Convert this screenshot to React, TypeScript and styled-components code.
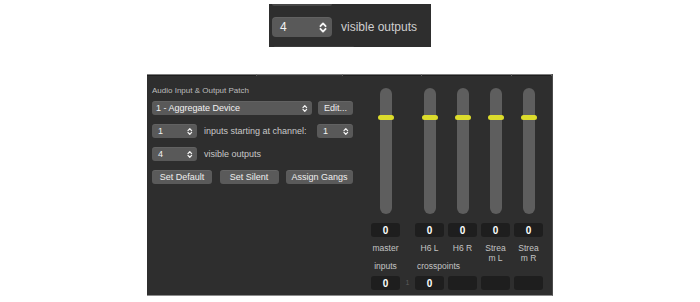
import React from "react";
import styled, { createGlobalStyle } from "styled-components";

const channels = [
  { name: "master", value: 0 },
  { name: "H6 L", value: 0 },
  { name: "H6 R", value: 0 },
  { name: ["Strea", "m L"], value: 0 },
  { name: ["Strea", "m R"], value: 0 },
];

const tabs = [110, 86, 79, 90, 0];

const UpDown: React.FC<{ size?: number }> = ({ size = 9 }) => (
  <svg width={size * 0.62} height={size} viewBox="0 0 6 10" fill="none">
    <path d="M1 4 L3 1.8 L5 4" stroke="#f4f4f4" strokeWidth="1.4" strokeLinecap="round" strokeLinejoin="round" />
    <path d="M1 6 L3 8.2 L5 6" stroke="#f4f4f4" strokeWidth="1.4" strokeLinecap="round" strokeLinejoin="round" />
  </svg>
);

const App: React.FC = () => {
  return (
    <Page>
      <GlobalStyle />
      <Banner>
        <Peek $width={60} />
        <BannerRow>
          <Control $width={60} $big>
            <span>4</span>
            <UpDown size={13} />
          </Control>
          <BannerText>visible outputs</BannerText>
        </BannerRow>
        <PeekBottom $width={80} />
      </Banner>

      <Panel>
        <TabStrip>
          {tabs.map((w, i) => (
            <Tab key={i} $width={w} $active={i === 1} />
          ))}
        </TabStrip>
        <Content>
          <LeftCol>
            <SectionTitle>Audio Input &amp; Output Patch</SectionTitle>
            <Rows>
              <Row>
                <Control $width={160} $pad={4}>
                  <span>1 - Aggregate Device</span>
                  <UpDown />
                </Control>
                <Button $width={35}>Edit...</Button>
              </Row>
              <Row>
                <Control $width={45}>
                  <span>1</span>
                  <UpDown />
                </Control>
                <RowText>inputs starting at channel:</RowText>
                <Control $width={36} $push>
                  <span>1</span>
                  <UpDown />
                </Control>
              </Row>
              <Row>
                <Control $width={45}>
                  <span>4</span>
                  <UpDown />
                </Control>
                <RowText>visible outputs</RowText>
              </Row>
              <Row $spread>
                <Button $width={60}>Set Default</Button>
                <Button $width={59}>Set Silent</Button>
                <Button $width={67}>Assign Gangs</Button>
              </Row>
            </Rows>
          </LeftCol>

          <Mixer>
            {channels.map((c, i) => {
              const col = i === 0 ? 1 : i + 2;
              return (
                <React.Fragment key={i}>
                  <Slot $col={col}>
                    <Thumb />
                  </Slot>
                  <ValueBox $col={col} $row={2}>
                    {c.value}
                  </ValueBox>
                  <Name $col={col}>
                    {Array.isArray(c.name) ? (
                      <>
                        {c.name[0]}
                        <br />
                        {c.name[1]}
                      </>
                    ) : (
                      c.name
                    )}
                  </Name>
                </React.Fragment>
              );
            })}
            <GroupLabel $col="1">inputs</GroupLabel>
            <GroupLabel $col="3 / span 3" $left>
              crosspoints
            </GroupLabel>
            <ValueBox $col={1} $row={5}>
              0
            </ValueBox>
            <Index>1</Index>
            <ValueBox $col={3} $row={5}>
              0
            </ValueBox>
            <ValueBox $col={4} $row={5} />
            <ValueBox $col={5} $row={5} />
            <ValueBox $col={6} $row={5} />
          </Mixer>
        </Content>
      </Panel>
    </Page>
  );
};

export default App;

const GlobalStyle = createGlobalStyle`
  html, body {
    margin: 0;
    padding: 0;
    background: #ffffff;
  }
  body {
    font-family: "Liberation Sans", Arial, sans-serif;
    -webkit-font-smoothing: antialiased;
  }
`;

const Page = styled.div`
  width: 700px;
  height: 302px;
  display: flex;
  flex-direction: column;
  align-items: center;
  overflow: hidden;
`;

const Banner = styled.div`
  margin-top: 4px;
  width: 162px;
  height: 43px;
  box-sizing: border-box;
  padding-left: 3px;
  background: #2e2e2e;
  display: flex;
  flex-direction: column;
`;

const Peek = styled.div<{ $width: number }>`
  width: ${(p) => p.$width}px;
  height: 2px;
  background: #474747;
  border-radius: 0 0 3px 3px;
`;

const PeekBottom = styled(Peek)`
  margin-top: auto;
  margin-left: 2px;
  height: 1px;
  background: #3c3c3c;
  border-radius: 2px 2px 0 0;
`;

const BannerRow = styled.div`
  margin-top: 11px;
  display: flex;
  align-items: center;
  gap: 9px;
  height: 20px;
`;

const BannerText = styled.span`
  font-size: 12px;
  color: #cfcfcf;
`;

const Panel = styled.div`
  margin-top: 27px;
  width: 406px;
  height: 222px;
  box-sizing: border-box;
  background: #2e2e2e;
  border-right: 1px solid #4c4c4c;
  border-bottom: 1px solid #8c8c8c;
  display: flex;
  flex-direction: column;
`;

const TabStrip = styled.div`
  display: flex;
  height: 2px;
`;

const Tab = styled.div<{ $width: number; $active?: boolean }>`
  ${(p) => (p.$width ? `width: ${p.$width}px;` : "flex: 1;")}
  box-sizing: border-box;
  border-top: 1px solid #7e7e7e;
  border-right: 1px solid #5a5a5a;
  background: ${(p) => (p.$active ? "transparent" : "#1e1e1e")};
`;

const Content = styled.div`
  display: flex;
  align-items: flex-start;
  gap: 18px;
  padding-left: 5px;
`;

const LeftCol = styled.div`
  width: 201px;
  padding-top: 10px;
  display: flex;
  flex-direction: column;
`;

const SectionTitle = styled.div`
  font-size: 8px;
  line-height: 10px;
  color: #bdbdbd;
  margin-bottom: 5px;
`;

const Rows = styled.div`
  display: flex;
  flex-direction: column;
  gap: 9px;
`;

const Row = styled.div<{ $spread?: boolean }>`
  display: flex;
  align-items: center;
  height: 14px;
  gap: 6px;
  justify-content: ${(p) => (p.$spread ? "space-between" : "flex-start")};
`;

const Control = styled.div<{ $width: number; $pad?: number; $big?: boolean; $push?: boolean }>`
  width: ${(p) => p.$width}px;
  height: ${(p) => (p.$big ? 20 : 14)}px;
  box-sizing: border-box;
  padding: 0 ${(p) => (p.$big ? 5 : 4)}px 0 ${(p) => (p.$big ? 8 : p.$pad ?? 6)}px;
  margin-left: ${(p) => (p.$push ? "auto" : "0")};
  background: #595959;
  border-radius: ${(p) => (p.$big ? 4 : 3)}px;
  box-shadow: inset 0 1px 0 rgba(255, 255, 255, 0.06);
  display: flex;
  align-items: center;
  justify-content: space-between;
  color: #f2f2f2;
  font-size: ${(p) => (p.$big ? 12 : 9)}px;
  white-space: nowrap;
`;

const RowText = styled.span`
  margin-left: 1px;
  font-size: 9px;
  color: #c8c8c8;
  white-space: nowrap;
`;

const Button = styled.div<{ $width: number }>`
  width: ${(p) => p.$width}px;
  height: 14px;
  background: #5a5a5a;
  border-radius: 3px;
  box-shadow: inset 0 1px 0 rgba(255, 255, 255, 0.07);
  display: flex;
  align-items: center;
  justify-content: center;
  color: #eeeeee;
  font-size: 9px;
  white-space: nowrap;
`;

const Mixer = styled.div`
  margin-top: 12px;
  display: grid;
  grid-template-columns: 29px 7px 29px 29px 29px 29px;
  grid-template-rows: 135px 14px 23px 16px 14px;
  column-gap: 4px;
`;

const Slot = styled.div<{ $col: number }>`
  grid-column: ${(p) => p.$col};
  grid-row: 1;
  justify-self: center;
  align-self: start;
  position: relative;
  width: 12px;
  height: 126px;
  border-radius: 6px;
  background: #5e5e5e;
`;

const Thumb = styled.div`
  position: absolute;
  top: 27px;
  left: -2px;
  width: 16px;
  height: 5px;
  border-radius: 3px;
  background: #dcdc2c;
`;

const ValueBox = styled.div<{ $col: number; $row: number }>`
  grid-column: ${(p) => p.$col};
  grid-row: ${(p) => p.$row};
  background: #1e1e1e;
  border-radius: 3px;
  display: flex;
  align-items: center;
  justify-content: center;
  color: #ffffff;
  font-size: 10px;
  font-weight: bold;
`;

const Name = styled.div<{ $col: number }>`
  grid-column: ${(p) => p.$col};
  grid-row: 3;
  padding-top: 6px;
  font-size: 8.5px;
  line-height: 10px;
  color: #c4c4c4;
  text-align: center;
  white-space: nowrap;
`;

const GroupLabel = styled.div<{ $col: string; $left?: boolean }>`
  grid-column: ${(p) => p.$col};
  grid-row: 4;
  padding-top: 1px;
  padding-left: ${(p) => (p.$left ? 2 : 0)}px;
  font-size: 8.5px;
  line-height: 10px;
  color: #c4c4c4;
  text-align: ${(p) => (p.$left ? "left" : "center")};
  white-space: nowrap;
`;

const Index = styled.div`
  grid-column: 2;
  grid-row: 5;
  font-size: 7px;
  line-height: 14px;
  color: #5c5c5c;
  text-align: center;
`;
